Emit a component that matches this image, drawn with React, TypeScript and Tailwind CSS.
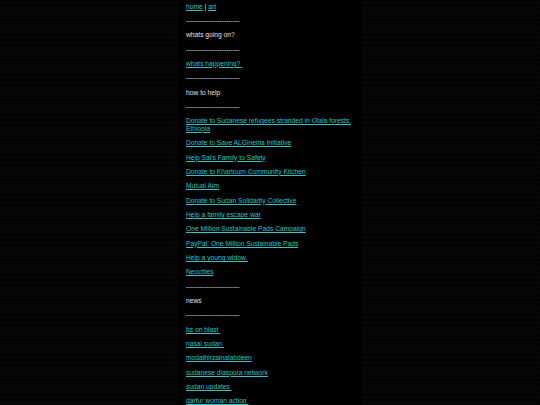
import React from "react";

const DASHES = "------------------------";

const helpLinks = [
  "Donate to Sudanese refugees stranded in Olala forests, Ethiopia",
  "Donate to Save ALGineina Initiative",
  "Help Sai's Family to Safety",
  "Donate to Khartoum Community Kitchen",
  "Mutual Aim",
  "Donate to Sudan Solidarity Collective",
  "Help a family escape war",
  "One Million Sustainable Pads Campaign",
  "PayPal: One Million Sustainable Pads",
  "Help a young widow\u00a0",
  "Neocities",
];

const newsLinks = [
  "bs on blast\u00a0",
  "nasal sudan\u00a0",
  "modathirzainalabdeen",
  "sudanese diaspora network",
  "sudan updates\u00a0",
  "darfur woman action\u00a0",
];

const linkClass = "text-[#2ec4c4] underline";

const Line: React.FC<{ children: React.ReactNode }> = ({ children }) => (
  <p className="mb-[6.75px] leading-[7.6px]">{children}</p>
);

const Divider = () => <Line>{DASHES}</Line>;

const App: React.FC = () => {
  return (
    <div className="min-h-[405px] h-[405px] overflow-hidden bg-[#040404] bg-[radial-gradient(circle,#0f0f0f_0.6px,transparent_0.8px)] bg-[length:4px_5px]">
      <div
        className="mx-auto w-[184px] min-h-full bg-black pl-2 pt-[2.5px] text-[6.7px] text-[#e0e0e0]"
        style={{ fontFamily: '"Liberation Sans", Arial, sans-serif' }}
      >
        <Line>
          <a href="#" className={linkClass}>
            home
          </a>{" "}
          |{" "}
          <a href="#" className={linkClass}>
            art
          </a>
        </Line>
        <Divider />
        <Line>whats going on?</Line>
        <Divider />
        <Line>
          <a href="#" className={linkClass}>
            whats happening?{"\u00a0"}
          </a>
        </Line>
        <Divider />
        <Line>how to help</Line>
        <Divider />
        {helpLinks.map((item) => (
          <Line key={item}>
            <a href="#" className={linkClass}>
              {item}
            </a>
          </Line>
        ))}
        <Divider />
        <Line>news</Line>
        <Divider />
        {newsLinks.map((item) => (
          <Line key={item}>
            <a href="#" className={linkClass}>
              {item}
            </a>
          </Line>
        ))}
      </div>
    </div>
  );
};

export default App;
